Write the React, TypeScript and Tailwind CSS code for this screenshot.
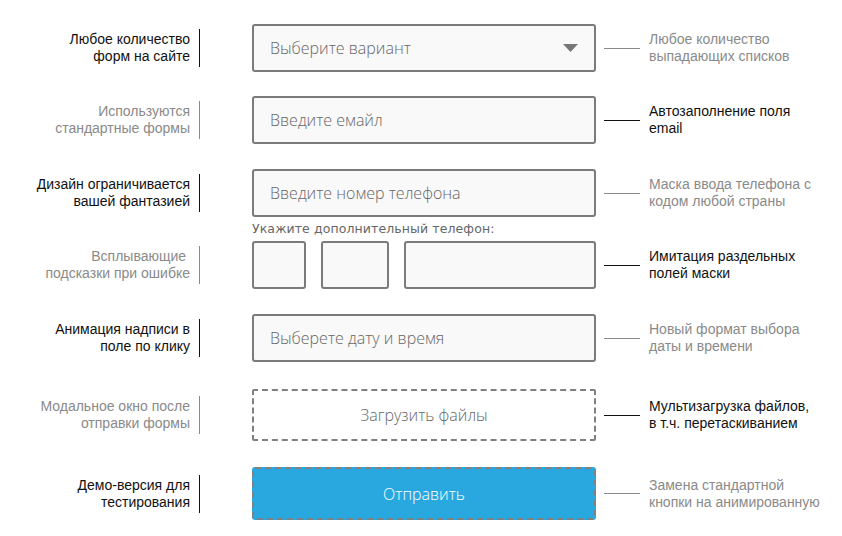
import React from "react";

const BLACK = "#111111";
const GRAY = "#8a8a8a";

function Left({ lines, dark }: { lines: string[]; dark: boolean }) {
  return (
    <div className="w-[200px] shrink-0 flex justify-end items-center">
      <div
        className="mr-[9px] text-right text-[14px] leading-[17px] font-['Liberation_Sans',Arial,sans-serif]"
        style={{ color: dark ? BLACK : GRAY }}
      >
        {lines.map((l, i) => (
          <div key={i} className="whitespace-pre">{l}</div>
        ))}
      </div>
      <div className={dark ? "w-px h-[38px] bg-[#111]" : "w-px h-[38px] bg-[#8a8a8a]"} />
    </div>
  );
}

function Right({ lines, dark }: { lines: string[]; dark: boolean }) {
  return (
    <div className="flex items-center">
      <div className={dark ? "ml-[8px] w-[36px] h-px bg-[#111]" : "ml-[8px] w-[36px] h-px bg-[#8a8a8a]"} />
      <div
        className="ml-[9px] text-[14px] leading-[17px] font-['Liberation_Sans',Arial,sans-serif]"
        style={{ color: dark ? BLACK : GRAY }}
      >
        {lines.map((l, i) => (
          <div key={i} className="whitespace-pre">{l}</div>
        ))}
      </div>
    </div>
  );
}

const boxCls =
  "h-full w-full border-2 border-[#7b7b7b] rounded-[3px] bg-[#f9f9f9] flex items-center pl-[16px] text-[16px] font-light text-[#666] font-['Open_Sans',sans-serif]";

export default function App() {
  return (
    <div className="w-[842px] h-[536px] bg-white pt-[24px] overflow-hidden">
      {/* Row 1 */}
      <div className="flex items-center h-[48px]">
        <Left lines={["Любое количество", "форм на сайте"]} dark />
        <div className="ml-[52px] w-[344px] h-full">
          <div className={boxCls + " justify-between pr-[16px]"}>
            <span>Выберите вариант</span>
            <svg width="15" height="8" viewBox="0 0 15 8">
              <polygon points="0,0 15,0 7.5,8" fill="#777" />
            </svg>
          </div>
        </div>
        <Right lines={["Любое количество", "выпадающих списков"]} dark={false} />
      </div>

      {/* Row 2 */}
      <div className="flex items-center h-[48px] mt-[24px]">
        <Left lines={["Используются", "стандартные формы"]} dark={false} />
        <div className="ml-[52px] w-[344px] h-full">
          <div className={boxCls}>Введите емайл</div>
        </div>
        <Right lines={["Автозаполнение поля", "email"]} dark />
      </div>

      {/* Row 3 */}
      <div className="flex items-center h-[48px] mt-[25px]">
        <Left lines={["Дизайн ограничивается", "вашей фантазией"]} dark />
        <div className="ml-[52px] w-[344px] h-full">
          <div className={boxCls}>Введите номер телефона</div>
        </div>
        <Right lines={["Маска ввода телефона с", "кодом любой страны"]} dark={false} />
      </div>

      {/* Caption */}
      <div className="flex h-[24px]">
        <div className="w-[200px] shrink-0" />
        <div className="ml-[52px] flex items-center text-[12.5px] text-[#666] font-['DejaVu_Sans',Verdana,sans-serif] tracking-[0.1px]">
          Укажите дополнительный телефон:
        </div>
      </div>

      {/* Row 4 */}
      <div className="flex items-center h-[48px]">
        <Left lines={["Всплывающие\u00a0", "подсказки при ошибке"]} dark={false} />
        <div className="ml-[52px] w-[344px] h-full flex gap-[15px]">
          <div className="w-[54px] h-full border-2 border-[#7b7b7b] rounded-[3px] bg-[#f9f9f9]" />
          <div className="w-[68px] h-full border-2 border-[#7b7b7b] rounded-[3px] bg-[#f9f9f9]" />
          <div className="flex-1 h-full border-2 border-[#7b7b7b] rounded-[3px] bg-[#f9f9f9]" />
        </div>
        <Right lines={["Имитация раздельных", "полей маски"]} dark />
      </div>

      {/* Row 5 */}
      <div className="flex items-center h-[48px] mt-[25px]">
        <Left lines={["Анимация надписи в", "поле по клику"]} dark />
        <div className="ml-[52px] w-[344px] h-full">
          <div className={boxCls}>Выберете дату и время</div>
        </div>
        <Right lines={["Новый формат выбора", "даты и времени"]} dark={false} />
      </div>

      {/* Row 6 */}
      <div className="flex items-center h-[52px] mt-[27px]">
        <Left lines={["Модальное окно после", "отправки формы"]} dark={false} />
        <div className="ml-[52px] w-[344px] h-full">
          <div className="h-full w-full border-2 border-dashed border-[#808080] rounded-[2px] bg-white flex items-center justify-center text-[16px] font-light text-[#666] font-['Open_Sans',sans-serif]">
            Загрузить файлы
          </div>
        </div>
        <Right lines={["Мультизагрузка файлов,", "в т.ч. перетаскиванием"]} dark />
      </div>

      {/* Row 7 */}
      <div className="flex items-center h-[53px] mt-[26px]">
        <Left lines={["Демо-версия для", "тестирования"]} dark />
        <div className="ml-[52px] w-[344px] h-full">
          <div className="h-full w-full border-2 border-dashed border-[#808080] rounded-[3px] bg-[#29a8e0] flex items-center justify-center text-[16px] font-light text-white font-['Open_Sans',sans-serif]">
            Отправить
          </div>
        </div>
        <Right lines={["Замена стандартной", "кнопки на анимированную"]} dark={false} />
      </div>
    </div>
  );
}
